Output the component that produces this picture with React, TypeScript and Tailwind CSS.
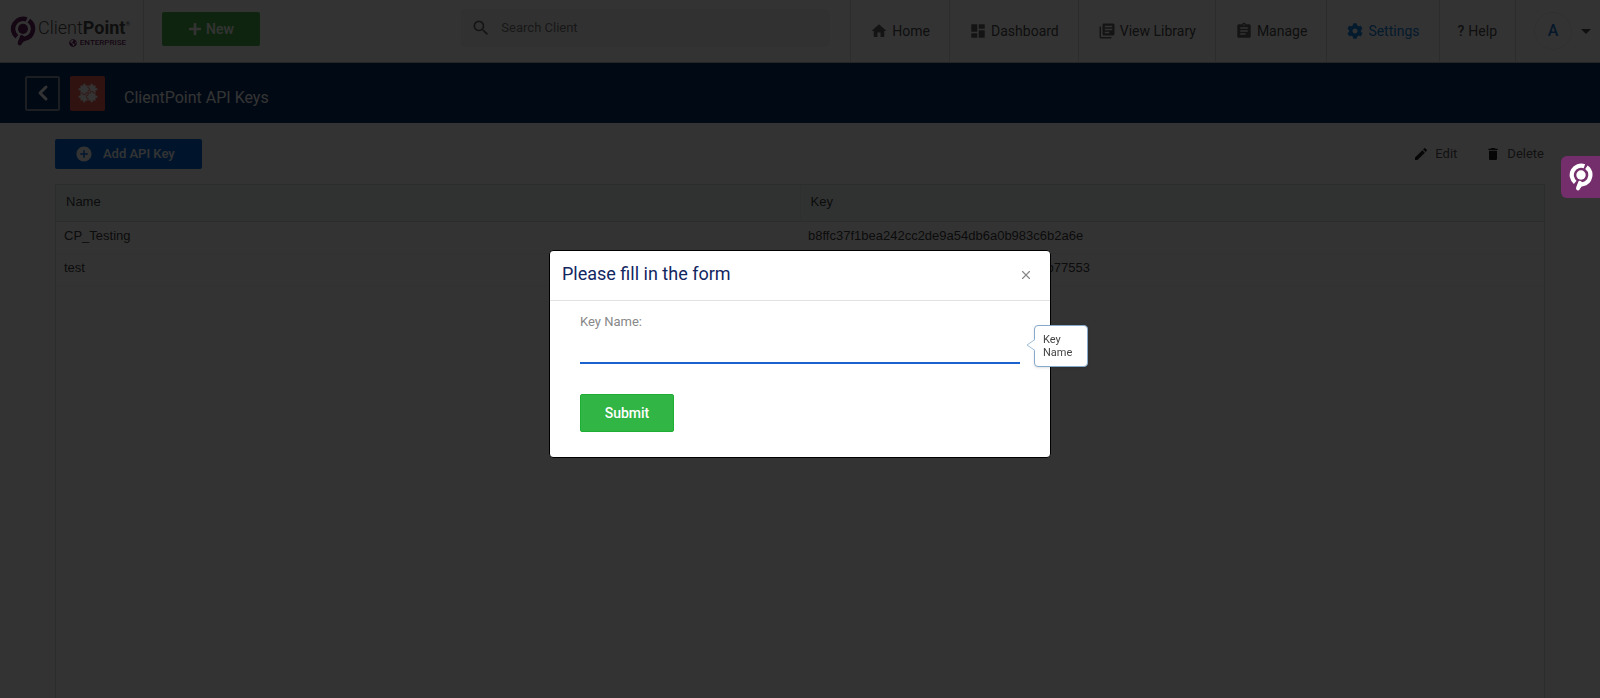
import type { ComponentType } from 'react'
import {
  MdAddCircle,
  MdArrowDropDown,
  MdAssignment,
  MdDashboard,
  MdDelete,
  MdEdit,
  MdHome,
  MdLibraryBooks,
  MdSearch,
} from 'react-icons/md'
import { FaCog, FaGlobeAmericas, FaPlus } from 'react-icons/fa'
import { ChevronLeft, X } from 'lucide-react'

interface NavItem {
  label: string
  icon: ComponentType<{ className?: string }>
  active?: boolean
}

interface ApiKey {
  name: string
  key: string
}

const navItems: NavItem[] = [
  { label: 'Home', icon: MdHome },
  { label: 'Dashboard', icon: MdDashboard },
  { label: 'View Library', icon: MdLibraryBooks },
  { label: 'Manage', icon: MdAssignment },
  { label: 'Settings', icon: FaCog, active: true },
]

const apiKeys: ApiKey[] = [
  { name: 'CP_Testing', key: 'b8ffc37f1bea242cc2de9a54db6a0b983c6b2a6e' },
  { name: 'test', key: '4e91d07ab38e62fd5a90b1ed648f2a70beb77553' },
]

function BrandMark({ className }: { className?: string }) {
  return (
    <svg viewBox="0 0 24 28" fill="none" className={className} aria-hidden="true">
      <circle cx="12" cy="12" r="4.7" fill="currentColor" />
      <path
        d="M6.2 19.3A9.4 9.4 0 0 1 15.4 3.2"
        stroke="currentColor"
        strokeWidth="4.2"
      />
      <path
        d="M17.4 4.3A9.4 9.4 0 0 1 13.6 21.2Q10.6 21.6 9.4 24.4"
        stroke="currentColor"
        strokeWidth="4.2"
      />
      <path
        d="M11 19.8L9 25.4"
        stroke="currentColor"
        strokeWidth="4"
        strokeLinecap="round"
      />
    </svg>
  )
}

// Four interlocked jigsaw pieces
function PuzzleIcon({ className }: { className?: string }) {
  return (
    <svg viewBox="0 0 24 24" className={className} aria-hidden="true">
      <g fill="currentColor">
        <path d="M3 3h18v18H3z" />
        <path d="M6.4 0.8h2.4v3H6.4zM15.2 0.8h2.4v3h-2.4zM6.4 20.2h2.4v3H6.4zM15.2 20.2h2.4v3h-2.4z" />
        <path d="M0.8 6.4h3v2.4h-3zM0.8 15.2h3v2.4h-3zM20.2 6.4h3v2.4h-3zM20.2 15.2h3v2.4h-3z" />
      </g>
      <path
        d="M12 3v3h2v3h-2v6h-2v3h2v3M3 12h3v2h3v-2h6v-2h3v2h3"
        fill="none"
        stroke="#ee5e50"
        strokeWidth="0.9"
        strokeLinejoin="round"
      />
    </svg>
  )
}

function Header() {
  return (
    <header className="flex h-[63px] border-b border-[#c4c4c4] bg-white text-sm text-[#4c4c4c]">
      <a href="#" className="flex w-36 shrink-0 items-center border-r border-[#dcdcdc] pl-[10px]">
        <BrandMark className="h-[30px] w-[26px] text-[#6b1f60]" />
        <span className="flex flex-col items-end pt-1 pl-[2px]">
          <span className="flex text-lg leading-5">
            <span className="font-light">Client</span>
            <span className="font-bold">Point</span>
            <span className="text-[6px] leading-3">®</span>
          </span>
          <span className="flex items-center gap-[3px] pr-1 text-[8px] leading-[10px] font-medium text-[#6b1f60]">
            <FaGlobeAmericas />
            ENTERPRISE
          </span>
        </span>
      </a>

      <div className="flex flex-1 items-start pl-[18px]">
        <button
          type="button"
          className="mt-3 flex h-[34px] w-[98px] shrink-0 items-center justify-center gap-1 rounded-xs bg-[#46b648] text-sm font-medium text-white"
        >
          <FaPlus />
          New
        </button>
        <label className="mt-[9px] mr-5 ml-auto flex h-[38px] w-[369px] items-center gap-[10px] rounded-sm bg-[#f6f6f6] pl-[10px]">
          <MdSearch className="size-5 text-[#666]" />
          <input
            type="search"
            placeholder="Search Client"
            aria-label="Search Client"
            className="min-w-0 flex-1 bg-transparent text-[13px] outline-none placeholder:text-[#777]"
          />
        </label>
      </div>

      <nav className="flex shrink-0">
        {navItems.map(({ label, icon: Icon, active }) => (
          <a
            key={label}
            href="#"
            className={`flex items-center gap-1 border-l border-[#dcdcdc] px-[19px] ${active ? 'text-[#1581e0]' : ''}`}
          >
            <Icon
              className={active ? 'mx-px size-4' : 'size-[18px] text-[#666]'}
            />
            {label}
          </a>
        ))}
        <a href="#" className="flex items-center gap-1 border-l border-[#dcdcdc] px-[18px]">
          <span className="font-medium">?</span>
          Help
        </a>
        <button type="button" className="flex w-[85px] items-center border-l border-[#dcdcdc] pl-[18px]">
          <span className="flex size-[38px] shrink-0 items-center justify-center rounded-full border border-[#eee] text-base font-medium text-[#1a75cf]">
            A
          </span>
          <MdArrowDropDown className="ml-[2px] size-6 shrink-0" />
        </button>
      </nav>
    </header>
  )
}

function TitleBar() {
  return (
    <div className="flex h-[60px] items-center bg-[#052d64] pl-[25px] text-white">
      <button
        type="button"
        aria-label="Back"
        className="flex size-[35px] items-center justify-center rounded-xs border-2 border-[#8a94a8]"
      >
        <ChevronLeft className="size-6" strokeWidth={3} />
      </button>
      <span className="ml-[10px] flex size-[35px] items-center justify-center rounded-xs bg-[#ee5e50]">
        <PuzzleIcon className="size-5" />
      </span>
      <h1 className="pt-[10px] pl-[19px] text-base">ClientPoint API Keys</h1>
    </div>
  )
}

function KeysTable() {
  return (
    <div className="flex flex-1 flex-col border border-b-0 border-[#d4dcdc] font-['Liberation_Sans',Arial,sans-serif] text-[13px] text-[#3c3c3c]">
      <table className="w-full table-fixed border-collapse text-left">
        <thead>
          <tr className="h-9 border-b border-[#d4dcdc] bg-[#edf8f5]">
            <th className="px-[10px] pb-[2px] font-normal">Name</th>
            <th className="border-l border-[#e6efed] px-[10px] pb-[2px] font-normal">Key</th>
          </tr>
        </thead>
        <tbody>
          {apiKeys.map((apiKey) => (
            <tr key={apiKey.key} className="h-8 border-b border-[#f6f6f6]">
              <td className="px-2 pb-[2px]">{apiKey.name}</td>
              <td className="px-2 pb-[2px]">{apiKey.key}</td>
            </tr>
          ))}
        </tbody>
      </table>
    </div>
  )
}

function KeyFormDialog() {
  return (
    <div className="fixed inset-0 flex items-start justify-center bg-black/80 pt-[250px]">
      <form
        role="dialog"
        aria-labelledby="dialog-title"
        className="w-[502px] rounded-sm border border-black bg-white"
      >
        <div className="flex h-[50px] items-center justify-between border-b border-[#e2e2e2] pr-[17px] pb-[3px] pl-3">
          <h2 id="dialog-title" className="text-lg text-[#12265f]">
            Please fill in the form
          </h2>
          <button type="button" aria-label="Close" className="pt-[2px] text-[#888]">
            <X className="size-[14px]" />
          </button>
        </div>
        <div className="px-[30px] pt-[11px] pb-[25px]">
          <div className="relative">
            <label htmlFor="key-name" className="block text-[13px] leading-5 text-[#888]">
              Key Name:
            </label>
            <input
              id="key-name"
              type="text"
              aria-describedby="key-name-tip"
              className="block h-8 w-full border-b-2 border-[#1c62cf] outline-none"
            />
            <div
              id="key-name-tip"
              role="tooltip"
              className="absolute top-[13px] left-[454px] w-[54px] rounded-sm border border-[#86a9cc] bg-white px-2 py-[7px] text-[11px] leading-[13px] text-[#444] shadow"
            >
              <svg
                viewBox="0 0 9 12"
                className="absolute top-[13px] -left-[9px] h-3 w-[9px]"
                aria-hidden="true"
              >
                <path d="M9 0.5L1 6L9 11.5" fill="#fff" stroke="#9fbfdc" />
              </svg>
              Key Name
            </div>
          </div>
          <button
            type="submit"
            className="mt-[30px] block h-[38px] w-[94px] rounded-xs border border-[#1fae34] bg-[#31b545] text-sm font-medium text-white"
          >
            Submit
          </button>
        </div>
      </form>
    </div>
  )
}

export default function App() {
  return (
    <div className="flex min-h-screen flex-col bg-white font-[Roboto,sans-serif]">
      <Header />
      <TitleBar />
      <main className="flex flex-1 flex-col px-[55px] pt-4">
        <div className="flex items-center text-[13px] text-[#555]">
          <button
            type="button"
            className="flex h-[30px] w-[147px] items-center gap-[10px] rounded-xs bg-[#0069dc] pl-5 font-medium text-white"
          >
            <MdAddCircle className="size-[18px]" />
            Add API Key
          </button>
          <button type="button" className="ml-auto flex items-center gap-[6px]">
            <MdEdit className="size-4 text-[#222]" />
            Edit
          </button>
          <button type="button" className="mr-px ml-7 flex items-center gap-[6px]">
            <MdDelete className="size-4 text-[#222]" />
            Delete
          </button>
        </div>
        <div className="flex flex-1 flex-col pt-[15px]">
          <KeysTable />
        </div>
      </main>

      <KeyFormDialog />

      <button
        type="button"
        aria-label="Open ClientPoint"
        className="fixed top-[156px] right-0 flex h-[42px] w-[39px] items-center justify-center rounded-l-md bg-[#752e6c] text-white"
      >
        <BrandMark className="h-7 w-6" />
      </button>
    </div>
  )
}
